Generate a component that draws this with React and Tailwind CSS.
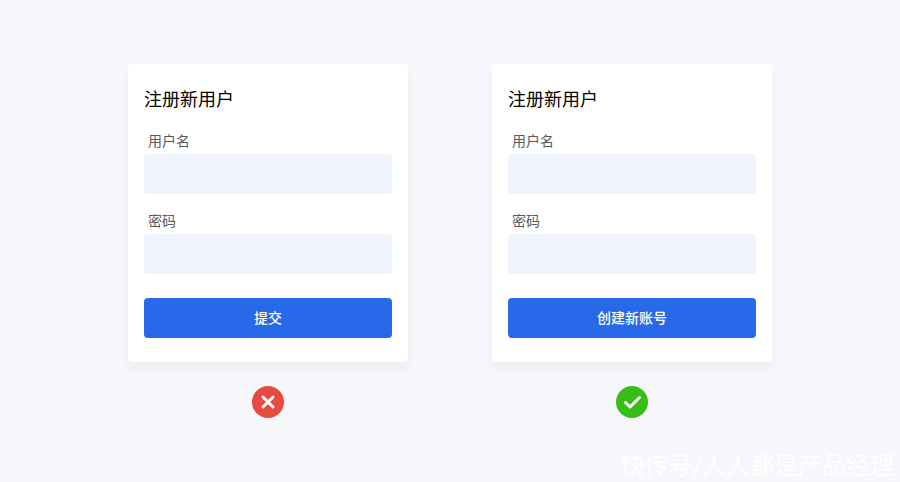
import { useId } from "react";

function Field({ label, type = "text" }) {
  const id = useId();

  return (
    <div className="flex flex-col gap-0.5">
      <label htmlFor={id} className="px-1 text-sm leading-6 text-[#595959]">
        {label}
      </label>
      <input
        id={id}
        type={type}
        className="h-10 w-full rounded bg-[#eff4fc] px-3 text-sm text-gray-900 outline-none focus:ring-2 focus:ring-[#2769e9]"
      />
    </div>
  );
}

function SignUpCard({ submitLabel }) {
  return (
    <form
      onSubmit={(e) => e.preventDefault()}
      className="w-full rounded bg-white px-4 pt-5 pb-6 shadow-[0_8px_12px_rgba(0,0,0,0.04)]"
    >
      <h2 className="text-lg leading-7 text-black">注册新用户</h2>
      <div className="mt-4 flex flex-col gap-3.5">
        <Field label="用户名" />
        <Field label="密码" type="password" />
      </div>
      <button
        type="submit"
        className="mt-6 h-10 w-full rounded bg-[#2769e9] pb-0.5 text-sm font-medium text-white"
      >
        {submitLabel}
      </button>
    </form>
  );
}

function WrongIcon() {
  return (
    <svg className="h-8 w-8" viewBox="0 0 32 32" fill="none" aria-hidden="true">
      <circle cx="16" cy="16" r="16" fill="#e84a40" />
      <path
        d="M11 11L21 21M21 11L11 21"
        stroke="#fff"
        strokeWidth="3"
        strokeLinecap="round"
      />
    </svg>
  );
}

function RightIcon() {
  return (
    <svg className="h-8 w-8" viewBox="0 0 32 32" fill="none" aria-hidden="true">
      <circle cx="16" cy="16" r="16" fill="#38bd18" />
      <path
        d="M9.5 16.5L14 21L23.5 11.5"
        stroke="#fff"
        strokeWidth="3"
        strokeLinecap="round"
        strokeLinejoin="round"
      />
    </svg>
  );
}

function Example({ submitLabel, icon }) {
  return (
    <section className="flex w-full max-w-[280px] flex-col items-center gap-6">
      <SignUpCard submitLabel={submitLabel} />
      {icon}
    </section>
  );
}

function App() {
  return (
    <div className="flex min-h-screen flex-col bg-[#f5f7fb] font-['Noto_Sans_CJK_SC',sans-serif]">
      <main className="flex flex-wrap justify-center gap-x-[84px] gap-y-10 px-4 pt-16">
        <Example submitLabel="提交" icon={<WrongIcon />} />
        <Example submitLabel="创建新账号" icon={<RightIcon />} />
      </main>
      <footer className="mt-auto px-1.5 pb-0.5 text-right text-2xl leading-8 text-white">
        快传号/人人都是产品经理
      </footer>
    </div>
  );
}

export default App;
